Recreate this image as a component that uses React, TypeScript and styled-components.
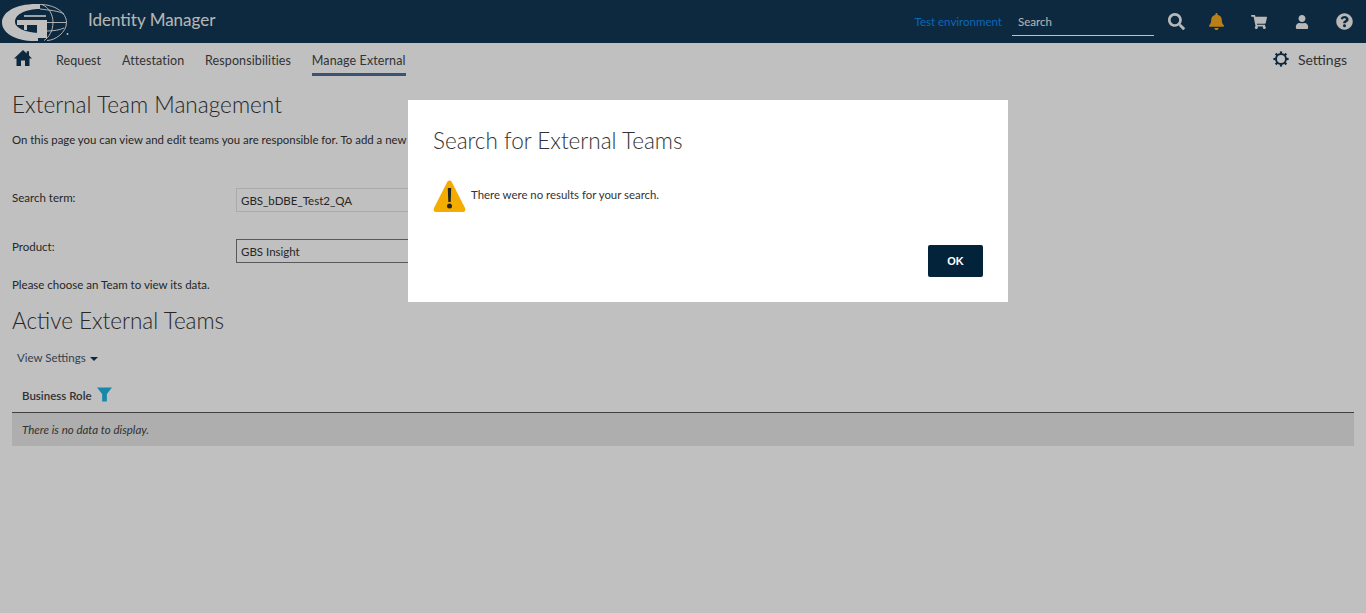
import React from "react";
import styled, { createGlobalStyle } from "styled-components";
import { FaSearch, FaBell, FaShoppingCart, FaUser, FaQuestionCircle } from "react-icons/fa";

const Global = createGlobalStyle`
  html, body { margin: 0; padding: 0; height: 100%; overflow: hidden; background: #fff; }
  body { font-family: "Lato", "Noto Sans", sans-serif; font-size: 11.5px; color: #333; }
  #root { height: 100%; }
`;
const Page = styled.div`height: 613px; position: relative; overflow: hidden;`;
const Header = styled.header`
  height: 43px; background: #123754; display: flex; align-items: center;
  padding-right: 13px; color: #fff;
`;
const LogoMark = styled.svg`width: 71px; height: 43px; flex: none;`;
const AppName = styled.div`font-size: 17px; margin-left: 17px; margin-top: -4px; color: #f2f2f2; flex: 1;`;
const EnvLabel = styled.span`font-size: 11.5px; color: #0f8af0; margin-right: 10px;`;
const SearchBox = styled.div`
  width: 136px; height: 27px; padding: 0 0 0 6px; border-bottom: 1px solid #fff; display: flex; align-items: center;
  font-size: 11.5px; color: #f0f0f0; margin-top: 1px;
`;
const IconRow = styled.div`display: flex; align-items: center; margin-left: 13px; gap: 25px;`;
const HeadIcon = styled.span<{ $c?: string; $s?: number; $pull?: number }>`
  display: flex; width: 18px; justify-content: center; font-size: ${p => p.$s || 16}px; color: ${p => p.$c || "#f5f5f5"};
  margin-right: ${p => p.$pull || 0}px;
`;
const Nav = styled.nav`display: flex; align-items: center; height: 34px; padding: 0 19px 0 14px;`;
const HomeIcon = styled.svg`width: 18px; height: 16px; margin: -4px 24px 0 0; flex: none;`;
const NavItem = styled.span<{ $active?: boolean }>`
  font-size: 12.5px; letter-spacing: .1px; color: #444; margin-right: 20.8px; height: 33px; line-height: 36px; box-sizing: border-box;
  align-self: flex-start;
  border-bottom: 3px solid ${p => (p.$active ? "#4d6f96" : "transparent")};
`;
const Spacer = styled.div`flex: 1;`;
const SettingsLink = styled.span`display: flex; align-items: center; gap: 9px; font-size: 14px; color: #444; margin-top: -2px;`;
const GearIcon = styled.svg`width: 16px; height: 16px;`;
const Main = styled.main`padding: 0 12px;`;
const Title = styled.h1`font-size: 22.6px; font-weight: 300; margin: 13px 0 0; line-height: 29px; color: #333;`;
const Intro = styled.p`font-size: 11.4px; margin: 13px 0 0; line-height: 15px; height: 15px; color: #333;`;
const FormRow = styled.div<{ $top: number }>`
  display: grid; grid-template-columns: 224px 400px; margin-top: ${p => p.$top}px; height: 24px; font-size: 11.5px;
`;
const FieldLabel = styled.label<{ $nudge: number }>`line-height: 17px; margin-top: ${p => p.$nudge}px; color: #333;`;
const Field = styled.div<{ $strong?: boolean }>`
  box-sizing: border-box; height: 24px; line-height: 24px; padding: 0 4px; background: #fff; color: #333;
  border: 1px solid ${p => (p.$strong ? "#777" : "#e2e2e2")};
`;
const Hint = styled.p`font-size: 11.5px; margin: 14px 0 0; line-height: 15px; color: #333;`;
const SubTitle = styled.h2`font-size: 22.5px; font-weight: 300; margin: 14px 0 0; line-height: 29px; color: #333;`;
const ViewSettings = styled.div`
  display: flex; align-items: center; gap: 4px; margin: 15px 0 0 5px; line-height: 15px; font-size: 11.5px; color: #45566a;
`;
const Caret = styled.span`
  width: 0; height: 0; border-left: 4px solid transparent; border-right: 4px solid transparent; border-top: 4px solid #123754; margin-top: 2px;
`;
const TableHead = styled.div`
  display: flex; align-items: center; gap: 5px; height: 33px; padding-top: 2px; margin-top: 12px; padding-left: 10px; border-bottom: 1px solid #555;
  box-sizing: content-box; font-size: 11.5px; font-weight: 600; color: #444;
`;
const FilterIcon = styled.svg`width: 15px; height: 15px; margin-top: -2px;`;
const EmptyRow = styled.div`
  height: 33px; line-height: 33px; padding-left: 10px; background: #e7e7e7; font-size: 11.5px; font-style: italic; color: #444;
`;
const Overlay = styled.div`position: absolute; inset: 0; background: rgba(0,0,0,.247);`;
const Dialog = styled.div`
  position: absolute; top: 100px; left: 408px; width: 600px; height: 202px; box-sizing: border-box; background: #fff;
  padding: 26px 25px 25px; display: flex; flex-direction: column;
`;
const DialogTitle = styled.h3`font-size: 22.5px; font-weight: 300; margin: 0; line-height: 30px; color: #333;`;
const DialogBody = styled.div`display: flex; align-items: center; gap: 5px; margin-top: 24px; font-size: 11.4px; color: #333;`;
const WarnIcon = styled.svg`width: 33px; height: 33px; flex: none;`;
const BodyText = styled.span`margin-top: -5px;`;
const DialogFooter = styled.div`margin-top: auto; display: flex; justify-content: flex-end;`;
const OkButton = styled.button`
  width: 55px; height: 32px; border: 0; border-radius: 2px; background: #03233b; color: #fff; font: 700 11px "Liberation Sans", sans-serif;
`;

const Gear = () => (
  <GearIcon viewBox="0 0 16 16">
    <circle cx="8" cy="8" r="5" fill="none" stroke="#123754" strokeWidth="2" />
    {[0, 45, 90, 135, 180, 225, 270, 315].map(a => (
      <rect key={a} x="6.9" y="0.4" width="2.2" height="2.4" fill="#123754" transform={`rotate(${a} 8 8)`} />
    ))}
  </GearIcon>
);

const Logo = () => (
  <LogoMark viewBox="0 0 71 43">
    <path d="M40 4C16 3 2 12 2 22.500 2 33 16 42 38 41v-8C25 32 15 28 15 22c0-8 11-13 25-13z" fill="#fff" />
    <path d="M17 20h30v18H37V25H27v5h-3v-5h-7z" fill="#fff" />
    <path d="M24 15h22v2H24z" fill="#fff" opacity=".8" />
    <g fill="none" stroke="#fff" strokeWidth=".9">
      <path d="M40 4.500c15 0 26.500 8 26.500 18S55 40.500 47 40.500" />
      <path d="M42 4.500c7 3 11 10 11 18s-4 15-9 18" />
      <path d="M40 9c8 1 20 2 24 5M47 22.500h19.500M47 31c6 0 13-1 17-3" />
    </g>
    <circle cx="67.500" cy="34" r=".9" fill="#fff" />
  </LogoMark>
);

export default function App() {
  return (
    <Page>
      <Global />
      <Header>
        <Logo />
        <AppName>Identity Manager</AppName>
        <EnvLabel>Test environment</EnvLabel>
        <SearchBox>Search</SearchBox>
        <IconRow>
          <HeadIcon $s={17} $pull={-3}><FaSearch /></HeadIcon>
          <HeadIcon $c="#f9a91f" $s={17}><FaBell /></HeadIcon>
          <HeadIcon><FaShoppingCart /></HeadIcon>
          <HeadIcon $s={14} $pull={-1}><FaUser /></HeadIcon>
          <HeadIcon $s={17}><FaQuestionCircle /></HeadIcon>
        </IconRow>
      </Header>
      <Nav>
        <HomeIcon viewBox="0 0 18 16">
          <path d="M9 0l3.700 3.400V1.200h2.300v4.300L18 8.500h-2.500V16H11v-5.500H7V16H2.500V8.500H0z" fill="#123754" />
        </HomeIcon>
        <NavItem>Request</NavItem>
        <NavItem>Attestation</NavItem>
        <NavItem>Responsibilities</NavItem>
        <NavItem $active>Manage External</NavItem>
        <Spacer />
        <SettingsLink><Gear />Settings</SettingsLink>
      </Nav>
      <Main>
        <Title>External Team Management</Title>
        <Intro>On this page you can view and edit teams you are responsible for. To add a new</Intro>
        <FormRow $top={41}>
          <FieldLabel $nudge={1}>Search term:</FieldLabel>
          <Field>GBS_bDBE_Test2_QA</Field>
        </FormRow>
        <FormRow $top={27}>
          <FieldLabel $nudge={-1}>Product:</FieldLabel>
          <Field $strong>GBS Insight</Field>
        </FormRow>
        <Hint>Please choose an Team to view its data.</Hint>
        <SubTitle>Active External Teams</SubTitle>
        <ViewSettings>View Settings <Caret /></ViewSettings>
        <TableHead>
          Business Role
          <FilterIcon viewBox="0 0 16 15"><path d="M0 0h16L10.500 7v8h-5V7z" fill="#1fb4e4" /></FilterIcon>
        </TableHead>
        <EmptyRow>There is no data to display.</EmptyRow>
      </Main>
      <Overlay />
      <Dialog>
        <DialogTitle>Search for External Teams</DialogTitle>
        <DialogBody>
          <WarnIcon viewBox="0 0 33 33">
            <path d="M16.500 .5c-1 0-1.700.5-2.300 1.500L1 28c-1 2 0 4 2 4h27c2 0 3-2 2-4L18.800 2c-.6-1-1.300-1.500-2.300-1.500z" fill="#f5ac00" />
            <path d="M14.800 8h3.400l-.5 14h-2.400z" fill="#222" />
            <circle cx="16.500" cy="26" r="2.500" fill="#222" />
          </WarnIcon>
          <BodyText>There were no results for your search.</BodyText>
        </DialogBody>
        <DialogFooter><OkButton>OK</OkButton></DialogFooter>
      </Dialog>
    </Page>
  );
}
